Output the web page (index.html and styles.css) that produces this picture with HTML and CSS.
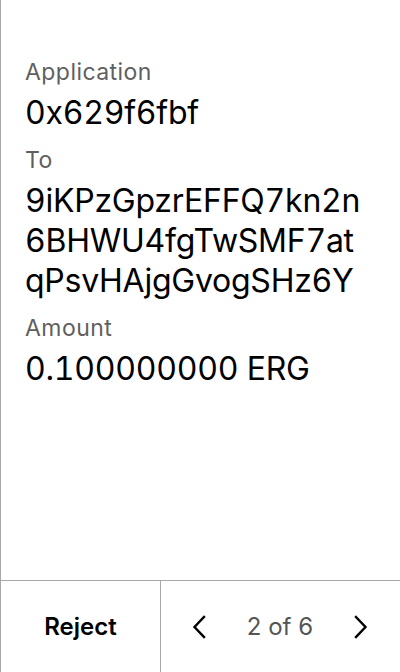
FILE: index.html
```html
<!DOCTYPE html>
<html>
<head>
<meta charset="utf-8">
<link rel="stylesheet" href="styles.css">
</head>
<body>
<div class="screen">
  <main class="content">
    <div class="field">
      <div class="label">Application</div>
      <div class="value">0x629f6fbf</div>
    </div>
    <div class="field">
      <div class="label">To</div>
      <div class="value">9iKPzGpzrEFFQ7kn2n<br>6BHWU4fgTwSMF7at<br>qPsvHAjgGvogSHz6Y</div>
    </div>
    <div class="field">
      <div class="label">Amount</div>
      <div class="value">0.100000000 ERG</div>
    </div>
  </main>
  <footer class="footer">
    <div class="reject">Reject</div>
    <div class="pager">
      <svg class="chev" width="24" height="24" viewBox="0 0 24 24"><path d="M16 2 L6.5 12 L16 22" fill="none" stroke="#000" stroke-width="2.4" stroke-linecap="square"/></svg>
      <span class="count">2 of 6</span>
      <svg class="chev" width="24" height="24" viewBox="0 0 24 24"><path d="M8 2 L17.5 12 L8 22" fill="none" stroke="#000" stroke-width="2.4" stroke-linecap="square"/></svg>
    </div>
  </footer>
</div>
</body>
</html>
```
FILE: styles.css
```css
html, body {
  margin: 0;
  padding: 0;
  background: #fff;
}
body {
  font-family: Inter, "Noto Sans", sans-serif;
  color: #000;
}
.screen {
  width: 400px;
  height: 672px;
  box-sizing: border-box;
  border-left: 1px solid #a8a8a8;
  display: flex;
  flex-direction: column;
}
.content {
  flex: 1;
  padding: 58px 0 0 24px;
  display: flex;
  flex-direction: column;
  gap: 13px;
}
.label {
  font-size: 23px;
  line-height: 28px;
  letter-spacing: 0.45px;
  color: #5f5f5f;
  margin-bottom: 7px;
}
.value {
  font-size: 32px;
  line-height: 40px;
  letter-spacing: -0.25px;
  font-variant-numeric: tabular-nums;
  color: #000;
}
.footer {
  height: 92px;
  border-top: 1px solid #a8a8a8;
  display: flex;
  box-sizing: border-box;
}
.reject {
  width: 159px;
  border-right: 1px solid #a8a8a8;
  display: flex;
  align-items: center;
  justify-content: center;
  font-size: 24px;
  font-weight: 600;
}
.pager {
  flex: 1;
  display: flex;
  align-items: center;
  justify-content: space-between;
  padding: 0 28px 0 27px;
}
.count {
  font-size: 24px;
  color: #555;
}
.chev {
  display: block;
}
```
